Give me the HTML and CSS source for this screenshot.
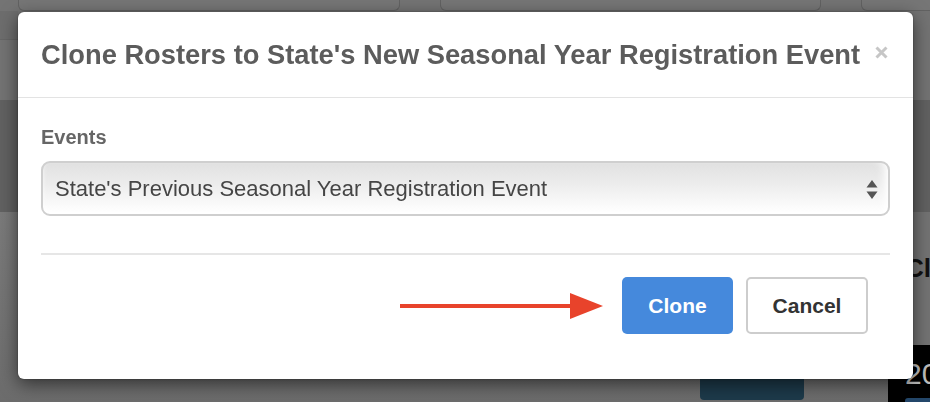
FILE: index.html
```html
<!DOCTYPE html>
<html lang="en">
<head>
<meta charset="utf-8">
<title>Clone Rosters</title>
<link rel="stylesheet" href="styles.css">
</head>
<body>
<div class="page">
  <div class="topcards">
    <div class="card card-a"></div>
    <div class="card card-b"></div>
    <div class="card card-c"></div>
  </div>
  <div class="band1"><div class="band1-left"></div></div>
  <div class="band2"></div>
  <div class="lower">
    <div class="lower-main">
      <div class="teal-btn"></div>
    </div>
    <div class="lower-side">
      <div class="side-gray"><span class="side-title">Cl</span></div>
      <div class="side-black"><span class="side-num">20</span><div class="side-blue"></div></div>
    </div>
  </div>
</div>

<div class="backdrop">
  <div class="modal">
    <div class="modal-header">
      <h4 class="modal-title">Clone Rosters to State's New Seasonal Year Registration Event</h4>
      <span class="close" aria-label="Close">
        <svg width="13" height="13" viewBox="0 0 13 13"><path d="M1.5 1.5 L11.5 11.5 M11.5 1.5 L1.5 11.5" stroke="#c6c6c6" stroke-width="3" stroke-linecap="butt"/></svg>
      </span>
    </div>
    <div class="modal-body">
      <label class="field-label">Events</label>
      <div class="select">
        <span class="select-text">State's Previous Seasonal Year Registration Event</span>
        <svg class="select-arrows" width="12" height="19" viewBox="0 0 12 19"><path d="M6 0 L11.5 7.5 L0.5 7.5 Z M0.5 11.5 L11.5 11.5 L6 19 Z" fill="#555"/></svg>
      </div>
      <div class="divider"></div>
      <div class="modal-footer">
        <svg class="arrow" width="203" height="26" viewBox="0 0 203 26"><rect x="0" y="11" width="175" height="4" fill="#e8432b"/><path d="M170 0 L203 13 L170 26 Z" fill="#e8432b"/></svg>
        <button class="btn btn-primary">Clone</button>
        <button class="btn btn-default">Cancel</button>
      </div>
    </div>
  </div>
</div>
</body>
</html>
```

FILE: styles.css
```css
* { box-sizing: border-box; }
html, body { margin: 0; padding: 0; }
body {
  width: 930px;
  height: 402px;
  overflow: hidden;
  background: #747474;
  font-family: "Liberation Sans", Arial, Helvetica, sans-serif;
}

/* ---------- page behind the backdrop ---------- */
.page { display: flex; flex-direction: column; height: 402px; }
.topcards {
  display: flex;
  gap: 40px;
  height: 11px;
  padding-left: 18px;
}
.card {
  height: 11px;
  background: #767676;
  border: 1px solid #626262;
  border-top: none;
  border-radius: 0 0 6px 6px;
}
.card-a { width: 382px; }
.card-b { width: 381px; }
.card-c { flex: 1; margin-right: -10px; }
.band1 { height: 89px; background: #737373; display: flex; }
.band1-left { width: 18px; height: 29px; border-bottom: 1px solid #666; background: #6d6d6d; }
.band2 { height: 112px; background: #616161; }
.lower { flex: 1; display: flex; background: linear-gradient(#7a7a7a, #6c6c6c); }
.lower-main { flex: 1; display: flex; align-items: flex-end; padding: 0 0 2px 700px; }
.teal-btn { width: 104px; height: 30px; background: #1d3a4a; border-radius: 4px; }
.lower-side { width: 42px; display: flex; flex-direction: column; overflow: hidden; }
.side-gray { height: 133px; padding: 41px 0 0 17px; background: #737373; white-space: nowrap; }
.side-title { font-weight: 700; font-size: 26px; color: #111; }
.side-black { flex: 1; background: #000; padding: 12px 0 0 17px; display: flex; flex-direction: column; white-space: nowrap; }
.side-num { font-size: 30px; color: #bdbdbd; line-height: 34px; }
.side-blue { margin-top: auto; height: 4px; background: #24476a; border-radius: 3px 0 0 0; }

/* ---------- modal ---------- */
.backdrop {
  position: fixed;
  inset: 0;
  padding: 12px 17px 0 18px;
}
.modal {
  width: 895px;
  height: 367px;
  background: #fff;
  border-radius: 6px;
  box-shadow: 0 5px 18px rgba(0, 0, 0, 0.55), 0 0 2px rgba(0, 0, 0, 0.4);
  display: flex;
  flex-direction: column;
}
.modal-header {
  height: 86px;
  padding: 27px 25px 0 23px;
  border-bottom: 1px solid #e3e3e3;
  display: flex;
  align-items: flex-start;
  justify-content: space-between;
}
.modal-title {
  margin: 0;
  font-size: 27.3px;
  line-height: 32px;
  font-weight: 700;
  color: #5c5c5c;
}
.close { display: block; margin-top: 7px; line-height: 0; }

.modal-body {
  padding: 27px 23px 0 23px;
  display: flex;
  flex-direction: column;
  flex: 1;
}
.field-label {
  display: block;
  font-size: 20px;
  line-height: 24px;
  font-weight: 700;
  color: #666;
}
.select {
  margin-top: 12px;
  height: 55px;
  border: 2px solid #cfcfcf;
  border-radius: 9px;
  background: linear-gradient(#e1e1e1 0%, #ececec 40%, #fbfbfb 85%, #fff 100%);
  box-shadow: inset -10px 0 8px -6px rgba(255, 255, 255, 0.9), inset 0 -3px 4px rgba(255, 255, 255, 0.8);
  display: flex;
  align-items: center;
  justify-content: space-between;
  padding: 0 10px 0 12px;
}
.select-text { font-size: 22px; color: #454545; }
.select-arrows { display: block; margin-top: 1px; }

.divider { margin-top: 37px; height: 2px; background: #e6e6e6; }

.modal-footer {
  display: flex;
  align-items: center;
  justify-content: flex-end;
  padding: 22px 22px 45px 0;
}
.arrow { display: block; margin-right: 19px; }
.btn {
  height: 57px;
  border-radius: 5px;
  font-family: "Liberation Sans", Arial, Helvetica, sans-serif;
  font-size: 21px;
  font-weight: 700;
  padding: 0;
  cursor: pointer;
}
.btn-primary {
  width: 111px;
  background: #4589dc;
  color: #fff;
  border: none;
}
.btn-default {
  width: 122px;
  margin-left: 13px;
  background: #fff;
  color: #333;
  border: 2px solid #cdcdcd;
}
```
